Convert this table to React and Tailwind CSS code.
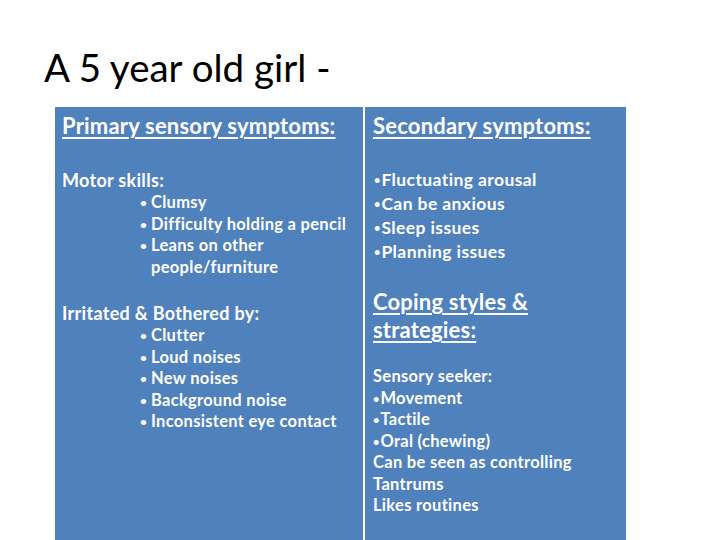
const FONT = { fontFamily: 'Lato, "Open Sans", "Liberation Sans", sans-serif' }

const motor = [['Clumsy'], ['Difficulty holding a pencil'], ['Leans on other', 'people/furniture']]
const irritated = [['Clutter'], ['Loud noises'], ['New noises'], ['Background noise'], ['Inconsistent eye contact']]
const secondary = ['Fluctuating arousal', 'Can be anxious', 'Sleep issues', 'Planning issues']
const coping = [
  { text: 'Movement', bullet: true },
  { text: 'Tactile', bullet: true },
  { text: 'Oral (chewing)', bullet: true },
  { text: 'Can be seen as controlling' },
  { text: 'Tantrums' },
  { text: 'Likes routines' },
]

export default function App() {
  return (
    <div className="flex h-[540px] w-[720px] flex-col overflow-hidden bg-white" style={FONT}>
      <h1 className="ml-[44px] mt-[43px] text-[38.5px] leading-[48px] text-black">A 5 year old girl -</h1>

      <div className="ml-[55px] mt-[16px] grid w-[571px] flex-1 grid-cols-[308px_2px_261px] grid-rows-[53px_124px_1fr] bg-[#4f81bd] font-bold text-white">
        {/* row 1 */}
        <div className="pl-[7px] pt-[6px]">
          <Header>Primary sensory symptoms:</Header>
        </div>
        <div className="row-span-3 bg-white" />
        <div className="pl-[8px] pt-[6px]">
          <Header>Secondary symptoms:</Header>
        </div>

        {/* row 2 */}
        <div className="pl-[7px] pt-[9px]">
          <p className="text-[18px] leading-[22px] tracking-[0.3px]">Motor skills:</p>
          <div className="mt-[1px]">
            <BulletList items={motor} />
          </div>
        </div>
        <div className="pl-[9px] pt-[8px]">
          {secondary.map((s) => (
            <p key={s} className="whitespace-nowrap text-[17.5px] leading-[24px] tracking-[0.4px]">
              <Dot />
              {s}
            </p>
          ))}
        </div>

        {/* row 3 */}
        <div className="pl-[7px] pt-[18px]">
          <p className="text-[18px] leading-[22px] tracking-[0.3px]">Irritated &amp; Bothered by:</p>
          <div className="mt-[1px]">
            <BulletList items={irritated} />
          </div>
        </div>
        <div className="pl-[8px] pt-[4px]">
          <p className="text-[22px] leading-[28px] tracking-[0.2px] underline decoration-2 underline-offset-[3px]">
            Coping styles &amp;
            <br />
            strategies:
          </p>
          <div className="mt-[22px] text-[16.5px] leading-[21.5px] tracking-[0.3px]">
            <p>Sensory seeker:</p>
            {coping.map((c) => (
              <p key={c.text} className="whitespace-nowrap">
                {c.bullet && <Dot />}
                {c.text}
              </p>
            ))}
          </div>
        </div>
      </div>
    </div>
  )
}

function Dot() {
  return <span className="mr-[1px] inline-block align-top text-[11px] tracking-normal">•</span>
}

function Header({ children }) {
  return (
    <p className="text-[22px] leading-[26px] tracking-[0.2px] underline decoration-2 underline-offset-[3px]">
      {children}
    </p>
  )
}

function BulletList({ items }) {
  return (
    <ul className="pl-[78px] text-[16.5px] leading-[21.5px] tracking-[0.3px]">
      {items.map((lines) => (
        <li key={lines[0]} className="relative whitespace-nowrap pl-[11px]">
          <span className="absolute left-0 top-0 text-[12px]">•</span>
          {lines.map((l) => (
            <span key={l} className="block">
              {l}
            </span>
          ))}
        </li>
      ))}
    </ul>
  )
}
